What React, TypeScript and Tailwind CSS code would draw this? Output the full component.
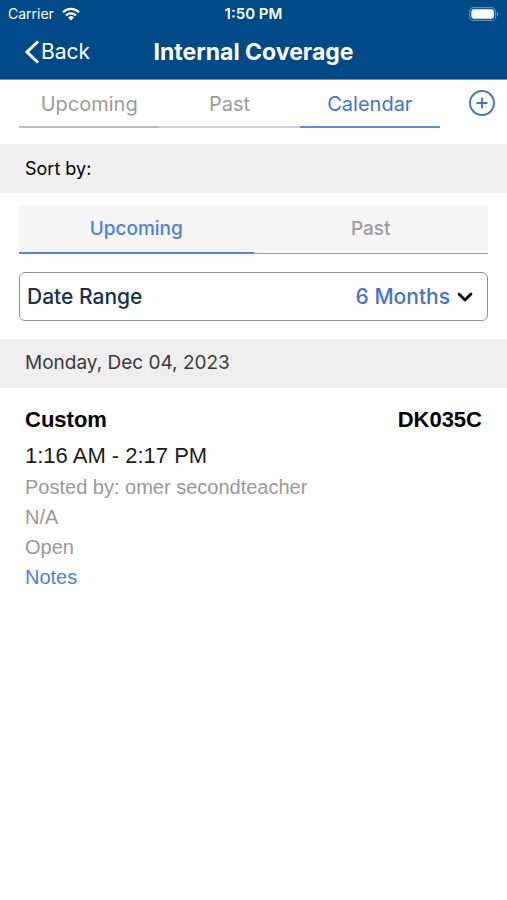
import clsx from "clsx";

const tabs = ["Upcoming", "Past", "Calendar"];
const details = ["Posted by: omer secondteacher", "N/A", "Open"];

const StatusBar = () => (
  <div className="grid h-7 grid-cols-3 items-center px-2 text-sm">
    <div className="flex items-center gap-2">
      <span>Carrier</span>
      <svg width="18" height="14" viewBox="0 0 18 14" fill="none" stroke="currentColor" strokeWidth="2.3" aria-hidden="true">
        <path d="M1 5.2a11.4 11.4 0 0 1 16 0" />
        <path d="M4 8.4a7.1 7.1 0 0 1 10 0" />
        <path d="M9 13.4 6.1 10.5a4.1 4.1 0 0 1 5.8 0Z" fill="currentColor" stroke="none" />
      </svg>
    </div>
    <span className="text-center text-[15px] font-semibold">1:50 PM</span>
    <svg className="justify-self-end" width="30" height="14" viewBox="0 0 30 14" aria-hidden="true">
      <rect x="0.6" y="0.6" width="26" height="12.8" rx="4" fill="none" stroke="#fff" strokeOpacity="0.4" strokeWidth="1.1" />
      <rect x="2.3" y="2.3" width="22.6" height="9.4" rx="2.4" fill="#fff" />
      <path d="M28 4.8v4.4c1.8-.7 1.8-3.7 0-4.4Z" fill="#fff" fillOpacity="0.45" />
    </svg>
  </div>
);

const Header = () => (
  <header className="border-b border-[#5f9bd0] bg-[#004a87] pb-[3px] text-white">
    <StatusBar />
    <div className="grid h-12 grid-cols-[1fr_auto_1fr] items-center px-6">
      <button type="button" className="flex items-center gap-px text-[21px]">
        <svg width="16" height="24" viewBox="0 0 16 24" fill="none" stroke="currentColor" strokeWidth="3" aria-hidden="true">
          <path d="M14 1.5 3 12l11 10.5" />
        </svg>
        Back
      </button>
      <h1 className="text-[23px] font-bold">Internal Coverage</h1>
    </div>
  </header>
);

const App = () => {
  return (
    <div className="min-h-screen bg-white font-['Inter',sans-serif] text-black">
      <Header />

      <main>
        <div className="flex items-start pl-[19px] pr-[11px]">
          <nav className="grid h-12 flex-1 grid-cols-3">
            {tabs.map((tab) => (
              <button
                key={tab}
                type="button"
                className={clsx(
                  "border-b-2 pt-px text-xl",
                  tab === "Calendar" && "border-[#5b8ae8] text-[#3f73d8]",
                  tab === "Upcoming" && "border-[#bdbdbd] text-[#9b9b9b]",
                  tab === "Past" && "border-[#d0d0d0] text-[#9b9b9b]"
                )}
              >
                {tab}
              </button>
            ))}
          </nav>
          <button type="button" aria-label="Add" className="ml-7 mt-[9px] text-[#3f73d8]">
            <svg width="28" height="28" viewBox="0 0 28 28" fill="none" stroke="currentColor" strokeWidth="1.9" aria-hidden="true">
              <circle cx="14" cy="14" r="12" />
              <path d="M14 8.5v11M8.5 14h11" />
            </svg>
          </button>
        </div>

        <h2 className="mt-4 flex h-[49px] items-center bg-[#f0f0f0] px-[25px] text-lg">Sort by:</h2>

        <div className="px-[19px] pt-3">
          <div className="grid h-[49px] grid-cols-2 bg-[#f5f5f5] text-[19px] font-medium">
            <button type="button" className="border-b-2 border-[#5285ec] pt-px text-[#4a7fe8]">Upcoming</button>
            <button type="button" className="border-b border-[#9b9b9b] text-[#9b9b9b]">Past</button>
          </div>

          <div className="relative mt-[18px] flex h-[49px] items-center rounded-md border border-[#8f8f8f] text-[21px]">
            <label htmlFor="range" className="pl-[7px] font-medium text-[#14304f]">Date Range</label>
            <select id="range" className="h-full flex-1 appearance-none bg-transparent pr-[37px] text-right font-medium text-[#3f73d8] [text-align-last:right]">
              <option>6 Months</option>
            </select>
            <svg className="pointer-events-none absolute right-[14px]" width="16" height="12" viewBox="0 0 16 12" fill="none" stroke="#000" strokeWidth="2.8" strokeLinecap="round" strokeLinejoin="round" aria-hidden="true">
              <path d="m2 3 6 6 6-6" />
            </svg>
          </div>
        </div>

        <h2 className="mt-[18px] flex h-[49px] items-center bg-[#eeeeee] px-[25px] text-[19px] text-[#3a3a3a]">
          Monday, Dec 04, 2023
        </h2>

        <article className="px-[25px] pt-4 font-['Liberation_Sans',Arial,sans-serif]">
          <div className="flex justify-between text-[22px] font-bold leading-8">
            <h3>Custom</h3>
            <span>DK035C</span>
          </div>
          <p className="pt-1 text-[22px] leading-8 text-[#1c1c1c]">1:16 AM - 2:17 PM</p>
          <div className="text-xl leading-[30px] text-[#999]">
            {details.map((line) => (
              <p key={line}>{line}</p>
            ))}
            <a href="#notes" className="text-[#4a7fe8]">Notes</a>
          </div>
        </article>
      </main>
    </div>
  );
};

export default App;
